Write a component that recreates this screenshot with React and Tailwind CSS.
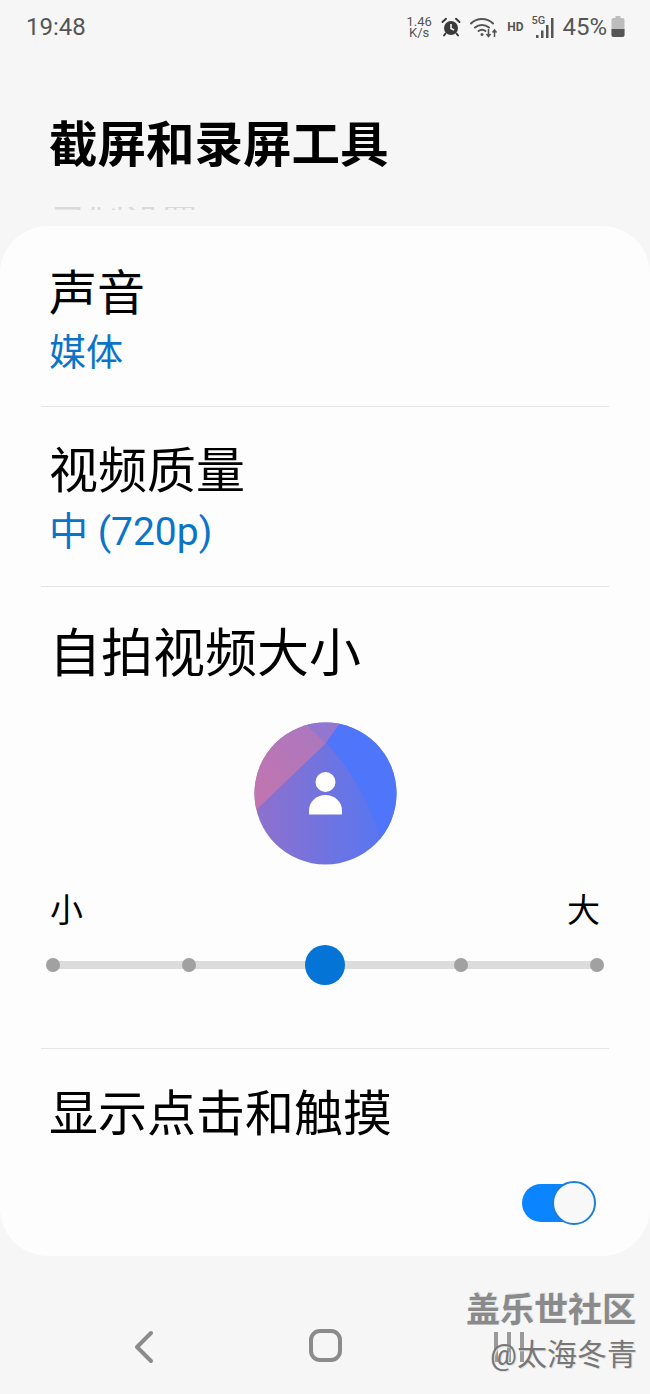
const cjk = "font-['Roboto','Noto_Sans_CJK_SC',sans-serif]";

function Divider() {
  return <div className="mx-[41px] h-px bg-[#e4e4e4]" />;
}

function Alarm() {
  return (
    <svg width="20" height="20" viewBox="0 0 20 20">
      <circle cx="10" cy="11" r="7" fill="#3a3a3a" />
      <path d="M10 7v4.500l3 1.500" fill="none" stroke="#f6f6f6" strokeWidth="1.600" />
      <path d="M1.500 5 5 1.800M18.500 5 15 1.800" stroke="#3a3a3a" strokeWidth="2" strokeLinecap="round" />
      <path d="M4.500 16.500 3 18.500M15.500 16.500 17 18.500" stroke="#3a3a3a" strokeWidth="2" strokeLinecap="round" />
    </svg>
  );
}

function Wifi() {
  return (
    <svg width="28" height="22" viewBox="0 0 28 22" fill="none">
      <path d="M1 7.500C7 1.500 17 1.500 23 7.500" stroke="#555" strokeWidth="2" strokeLinecap="round" />
      <path d="M5 11.500C9 8 15 8 19 11.500" stroke="#555" strokeWidth="2" strokeLinecap="round" />
      <path d="M8.500 15C10.500 13.500 13.500 13.500 15.500 15" stroke="#555" strokeWidth="2" strokeLinecap="round" />
      <circle cx="12" cy="18.500" r="1.500" fill="#555" />
      <path d="M18.500 13v7M16.500 18l2 2.500 2-2.500" stroke="#555" strokeWidth="1.500" />
      <path d="M24.500 21v-7M22.500 16.500l2-2.500 2 2.500" stroke="#555" strokeWidth="1.500" />
    </svg>
  );
}

function Signal() {
  return (
    <div className="relative h-6 w-6">
      <span className="absolute left-0 top-0 text-[11px] font-medium leading-[11px] text-[#555]">5G</span>
      <svg className="absolute left-0 top-0" width="24" height="24" viewBox="0 0 24 24" fill="#555">
        <rect x="5" y="20" width="2.500" height="3" />
        <rect x="10" y="15.500" width="2.500" height="7.500" />
        <rect x="15" y="10" width="2.500" height="13" />
        <rect x="20" y="3" width="2.500" height="20" />
      </svg>
    </div>
  );
}

function Battery() {
  return (
    <svg width="14" height="22" viewBox="0 0 14 22">
      <rect x="4.500" y="0" width="5" height="3" fill="#bdbdbd" />
      <rect x="0.500" y="2" width="13" height="19" rx="2" fill="#bdbdbd" />
      <path d="M0.500 13h13v6a2 2 0 0 1-2 2h-9a2 2 0 0 1-2-2z" fill="#555" />
    </svg>
  );
}

function Selfie() {
  return (
    <svg width="143" height="143" viewBox="0 0 143 143">
      <defs>
        <clipPath id="c"><circle cx="71.500" cy="71.500" r="71" /></clipPath>
        <linearGradient id="b" x1="0" y1="0" x2="1" y2="0">
          <stop offset="0" stopColor="#8f70cb" />
          <stop offset="1" stopColor="#5177f5" />
        </linearGradient>
        <linearGradient id="p" x1="0" y1="1" x2="1" y2="0">
          <stop offset="0" stopColor="#c474ad" />
          <stop offset="1" stopColor="#a978c0" />
        </linearGradient>
      </defs>
      <g clipPath="url(#c)">
        <rect width="143" height="143" fill="url(#b)" />
        <path d="M0 90 72 21 50 0H0z" fill="url(#p)" />
        <path d="M50 0h37L72 21z" fill="#9376cf" />
        <path d="M72 21 87 0h56v143h-15L125 110C112 75 95 45 72 21z" fill="#4f75fb" />
      </g>
      <circle cx="71.500" cy="60" r="10" fill="#fff" />
      <path d="M55 92.500v-4c0-9 7.500-15.500 16.500-15.500S88 79.500 88 88.500v4z" fill="#fff" />
    </svg>
  );
}

function Stop() {
  return (
    <div className="z-10 flex h-3.5 w-3.5 items-center justify-center rounded-full bg-[#a1a1a1]" />
  );
}

export default function App() {
  return (
    <div className={`relative flex h-[1394px] w-[650px] flex-col overflow-hidden bg-[#f6f6f6] ${cjk}`}>
      <div className="flex h-[54px] items-center justify-between pl-[26px] pr-[25px] text-[#555]">
        <span className="text-[24px] leading-none">19:48</span>
        <div className="flex items-center">
          <div className="flex w-[26px] flex-col items-center text-[13px] leading-[11px]">
            <span>1.46</span>
            <span>K/s</span>
          </div>
          <div className="ml-[9px]"><Alarm /></div>
          <div className="ml-[9px]"><Wifi /></div>
          <span className="ml-[9px] text-[12px] font-bold">HD</span>
          <div className="ml-[8px]"><Signal /></div>
          <span className="ml-[7px] text-[24px] leading-none">45%</span>
          <div className="ml-[4px]"><Battery /></div>
        </div>
      </div>

      <h1 className="ml-[49px] mt-[62px] text-[48.500px] font-bold leading-[60px] text-black">截屏和录屏工具</h1>

      <div className="ml-[50px] mt-[31px] h-[3px] overflow-hidden text-[37px] leading-[35px] text-[#dadada]">录制设置</div>

      <div className="mt-4 flex h-[1030px] flex-col rounded-[48px] bg-[#fdfdfd]">
        <div className="h-[180px]">
          <div className="ml-[49px] mt-[39px] h-[58px] text-[48px] leading-[58px] text-black">声音</div>
          <div className="ml-[49px] h-[62px] text-[37px] leading-[62px] text-[#0b74c9]">媒体</div>
        </div>
        <Divider />
        <div className="h-[179px]">
          <div className="ml-[49px] mt-[36px] h-[58px] text-[49px] leading-[58px] text-black">视频质量</div>
          <div className="ml-[49px] h-[64px] text-[39px] leading-[62px] text-[#0b74c9]">中 (720p)</div>
        </div>
        <Divider />
        <div className="flex h-[461px] flex-col">
          <div className="ml-[49px] mt-[37px] h-[62px] text-[52px] leading-[62px] text-black">自拍视频大小</div>
          <div className="mt-[36px] flex justify-center"><Selfie /></div>
          <div className="mt-[24px] flex h-[44px] items-center justify-between pl-[50px] pr-[50px] text-[33px] leading-[44px] text-black">
            <span>小</span>
            <span>大</span>
          </div>
          <div className="relative mx-[46px] mt-[12px] flex h-[40px] items-center justify-between">
            <div className="absolute left-1 right-1 top-4 h-2 bg-[#dcdcdc]" />
            <Stop />
            <Stop />
            <div className="z-10 flex w-3.5 justify-center">
              <div className="h-10 w-10 shrink-0 rounded-full bg-[#0474d6]" />
            </div>
            <Stop />
            <Stop />
          </div>
        </div>
        <Divider />
        <div>
          <div className="ml-[49px] mt-[36px] h-[60px] text-[49px] leading-[60px] text-black">显示点击和触摸</div>
          <div className="mr-[62px] mt-[39px] flex justify-end">
            <div className="relative h-[38px] w-[66px] rounded-full bg-[#0a84ff]">
              <div className="absolute right-[-8px] top-[-3px] h-[44px] w-[44px] rounded-full border-2 border-[#1a7fd8] bg-[#f8f8f8]" />
            </div>
          </div>
        </div>
      </div>

      <div className="relative flex-1">
        <div className="absolute left-[133px] top-[74px]">
          <svg width="22" height="34" viewBox="0 0 22 34" fill="none">
            <path d="M18 3 4 17l14 14" stroke="#8b8b8b" strokeWidth="4" strokeLinecap="round" strokeLinejoin="round" />
          </svg>
        </div>
        <div className="absolute left-[309px] top-[73px] h-[33px] w-[33px] rounded-[11px] border-[4px] border-[#8b8b8b]" />
        <div className="absolute left-[494px] top-[76px] flex gap-[9px]">
          <div className="h-[30px] w-1 bg-[#9a9a9a]" />
          <div className="h-[30px] w-1 bg-[#9a9a9a]" />
          <div className="h-[30px] w-1 bg-[#9a9a9a]" />
        </div>
      </div>

      <div className="absolute left-[466px] top-[1289px] whitespace-nowrap text-[34px] font-bold leading-[42px] text-[#8a8a8a] [text-shadow:1px_-1px_0_#dcdcdc]">盖乐世社区</div>
      <div className="absolute left-[490px] top-[1337px] whitespace-nowrap text-[30px] leading-[36px] text-[#777] [text-shadow:1px_1px_0_#e0e0e0]">@太海冬青</div>
    </div>
  );
}
